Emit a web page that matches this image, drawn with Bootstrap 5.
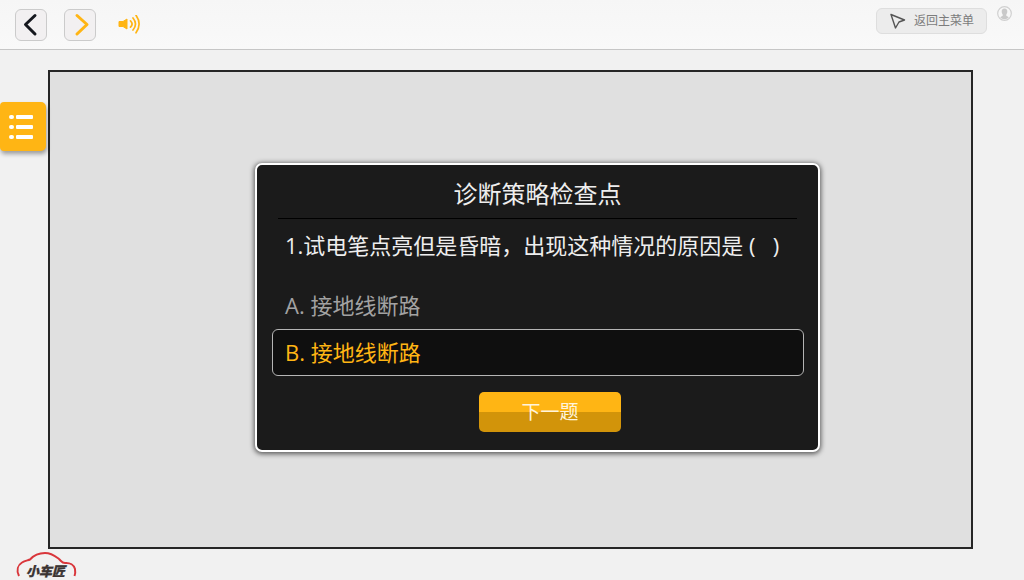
<!DOCTYPE html>
<html lang="zh-CN">
<head>
<meta charset="utf-8">
<meta name="viewport" content="width=device-width, initial-scale=1">
<title>诊断策略检查点</title>
<link href="https://cdn.jsdelivr.net/npm/bootstrap@5.3.0/dist/css/bootstrap.min.css" rel="stylesheet">
<style>
  body { background: #f1f1f1; font-family: "Open Sans", "Noto Sans CJK SC", sans-serif; }
  .topbar { height: 50px; background: linear-gradient(#f6f6f6, #f9f9f9); border-bottom: 1px solid #c6c6c6; padding: 0 12px 0 15px; }
  .nav-group { gap: 17px; }
  .btn-step { width: 32px; height: 32px; background: #f2f0f1; border: 1px solid #cbcbcb; border-radius: 6px; }
  .btn-sound { margin-left: 5px; }
  .user-group { gap: 10px; }
  .btn-home { height: 26px; margin-top: 8px; padding: 0 12px 0 13px; gap: 8px; background: #ececec; border: 1px solid #dedede; border-radius: 6px; color: #7c7c7c; font-size: 12px; line-height: 24px; }
  .btn-user { margin-top: 6px; }
  .workspace { padding: 20px 51px 0 48px; }
  .stage { background: #e0e0e0; border: 2px solid #262626; padding: 0 0 4px 54px; }
  .side-tab { left: 0; top: 52px; width: 46px; height: 49px; background: #ffb514; border-radius: 4px 5px 5px 4px; box-shadow: 1px 3px 4px rgba(0,0,0,.35); }
  .quiz { width: 565px; max-width: 100%; background: #1b1b1b; border: 2px solid #fff; border-radius: 7px; box-shadow: 0 1px 5px 1px rgba(0,0,0,.6); color: #eee; padding: 10px 14px 18px 15px; }
  .quiz-title { margin: 0 7px 10px 6px; padding-bottom: 5px; border-bottom: 1px solid #000; font-size: 24px; line-height: 38px; font-weight: 400; }
  .question { padding-left: 13px; margin-bottom: 20px; font-size: 22px; line-height: 33px; white-space: pre-wrap; }
  .answer { display: block; padding: 0 12px; border: 1px solid transparent; border-radius: 6px; color: #a2a2a2; font-size: 22px; line-height: 45px; cursor: pointer; }
  .btn-check:checked + .answer { background: #0f0f0f; border-color: #b5b5b5; color: #ffb514; }
  .btn-check:focus-visible + .answer { outline: 2px solid #ffb514; }
  .btn-next { width: 142px; height: 40px; margin: 16px 0 0 24px; border-radius: 5px; background: linear-gradient(#ffb514 50%, #d2940a 50%); color: #fff4dc; font-size: 19px; line-height: 40px; }
  .btn-next:hover { color: #fff; background: linear-gradient(#ffbd2e 50%, #dc9c0e 50%); }
  .brand-bar { height: 31px; padding: 3px 16px 0; }
  .brand-logo { overflow: visible; }
  .brand-name { font: italic 900 13px "Noto Sans CJK SC", sans-serif; }
</style>
</head>
<body class="min-vh-100 d-flex flex-column">

<header class="topbar d-flex justify-content-between">
  <nav class="nav-group d-flex align-items-center">
    <button type="button" class="btn btn-step p-0 d-flex align-items-center justify-content-center" aria-label="上一步">
      <svg width="30" height="30" viewBox="0 0 30 30" fill="none" stroke="#15181e" stroke-width="3" stroke-linecap="round" stroke-linejoin="round"><path d="M19 5.500 9.500 14.500l9.500 9.500"/></svg>
    </button>
    <button type="button" class="btn btn-step p-0 d-flex align-items-center justify-content-center" aria-label="下一步">
      <svg width="30" height="30" viewBox="0 0 30 30" fill="none" stroke="#ffb514" stroke-width="3" stroke-linecap="round" stroke-linejoin="round"><path d="M12 5.500l10 9-10 9.500"/></svg>
    </button>
    <button type="button" class="btn btn-sound border-0 p-0 d-flex" aria-label="声音">
      <svg width="24" height="20" viewBox="0 1 24 20"><path fill="#ffb514" stroke="#ffb514" stroke-linejoin="round" d="M1 7.500h4l4-2.500v10l-4-2.500H1z"/><path d="M12.500 6.800q3.200 3.200 0 6.400M15 4q5 6 0 12M18 1.200q6.200 8.800 0 17.600" fill="none" stroke="#ffb514" stroke-width="1.700" stroke-linecap="round"/></svg>
    </button>
  </nav>
  <div class="user-group d-flex align-items-start">
    <button type="button" class="btn btn-home d-flex align-items-center">
      <svg width="16" height="16" viewBox="0 0 16 16" fill="none" stroke="#555" stroke-width="1.400" stroke-linejoin="round"><path d="M1 1.500 14.500 7l-5.500 2-3.500 6z"/></svg>
      返回主菜单
    </button>
    <button type="button" class="btn btn-user border-0 p-0 d-flex" aria-label="用户">
      <svg width="15" height="15" viewBox="0 0 15 15"><circle cx="7.500" cy="7.500" r="6.800" fill="#f7f7f7" stroke="#d0d0d0" stroke-width="1.200"/><path fill="#c9c9c9" d="M7.500 2.500c2 0 3 1.300 2.800 3.200 0 1.300-.6 2-1 2.700v1.400l2.500 1.400c-1 1.200-2.500 2-4.300 2s-3.300-.8-4.300-2l2.500-1.400V8.400c-.4-.7-1-1.400-1-2.700-.2-1.900.8-3.200 2.800-3.200z"/></svg>
    </button>
  </div>
</header>

<main class="workspace flex-grow-1 d-flex position-relative">
  <button type="button" class="btn side-tab position-absolute border-0 p-0 d-flex align-items-center" aria-label="目录">
    <svg width="46" height="49" viewBox="0 0 46 49" fill="#fff"><rect x="9" y="13" width="5" height="4" rx="2"/><rect x="16" y="13" width="17" height="4" rx="1"/><rect x="9" y="23" width="5" height="4" rx="2"/><rect x="16" y="23" width="17" height="4" rx="1"/><rect x="9" y="33" width="5" height="4" rx="2"/><rect x="16" y="33" width="17" height="4" rx="1"/></svg>
  </button>
  <div class="stage flex-grow-1 d-flex align-items-center justify-content-center">
    <form class="quiz">
      <h1 class="quiz-title text-center">诊断策略检查点</h1>
      <p class="question">1.试电笔点亮但是昏暗，出现这种情况的原因是 (   )</p>
      <input class="btn-check" type="radio" name="answer" id="answer-a">
      <label class="answer" for="answer-a">A. 接地线断路</label>
      <input class="btn-check" type="radio" name="answer" id="answer-b" checked>
      <label class="answer" for="answer-b">B. 接地线断路</label>
      <div class="text-center"><button type="button" class="btn btn-next border-0 p-0">下一题</button></div>
    </form>
  </div>
</main>

<footer class="brand-bar">
  <svg class="brand-logo d-block" width="61" height="24" viewBox="0 0 61 24" role="img" aria-label="小车匠">
    <path fill="none" stroke="#d9363b" stroke-width="2" d="M3 24C0 18 2 13 6 10.500c3-2 6-2 8-3C18 3 23 1 29 1c7 0 10 3 14 6 3 3 3 4 6 4 5-.5 9 2 10 6 .5 3 .3 5-.5 7"/>
    <text class="brand-name" x="10" y="24" fill="#3b3433" stroke="#3b3433" stroke-width=".300">小车匠</text>
  </svg>
</footer>

<script src="https://cdn.jsdelivr.net/npm/bootstrap@5.3.0/dist/js/bootstrap.bundle.min.js"></script>
</body>
</html>
